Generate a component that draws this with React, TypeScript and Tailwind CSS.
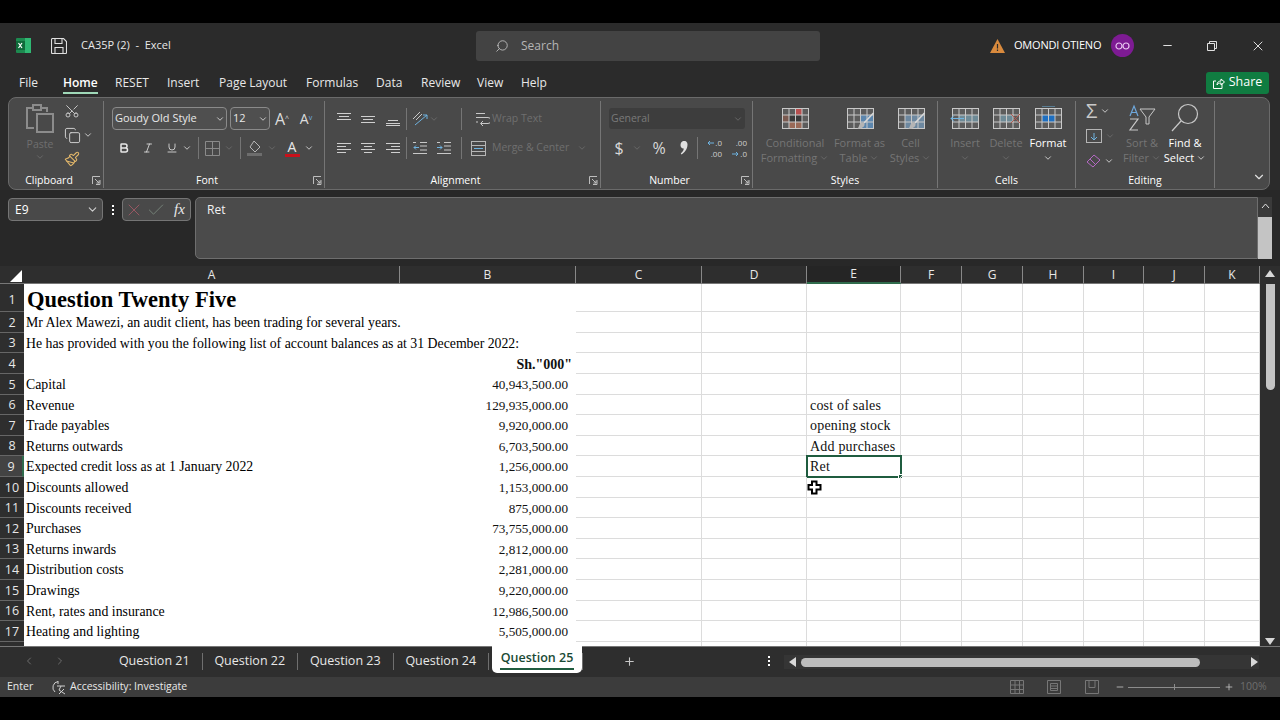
import React from 'react';
import { ChevronDown, ChevronLeft, ChevronRight, Minus, Plus, Search, X, Check, Copy, Scissors, Paintbrush, Bold, Italic, Underline } from 'lucide-react';

const UI = { fontFamily: '"Open Sans", "Noto Sans", sans-serif' };
const SERIF = { fontFamily: '"Liberation Serif", serif' };

const COLS = [
  { n: 'C', w: 'w-[126px]' },
  { n: 'D', w: 'w-[105px]' },
  { n: 'E', w: 'w-[94px]' },
  { n: 'F', w: 'w-[61px]' },
  { n: 'G', w: 'w-[61px]' },
  { n: 'H', w: 'w-[61px]' },
  { n: 'I', w: 'w-[60px]' },
  { n: 'J', w: 'w-[61px]' },
  { n: 'K', w: 'w-[55px]' },
];

const ROWS: { h: string; a?: string; b?: string; e?: string }[] = [
  { h: 'h-[28px]', a: 'Question Twenty Five' },
  { h: 'h-[21px]', a: 'Mr Alex Mawezi, an audit client, has been trading for several years.' },
  { h: 'h-[20px]', a: 'He has provided with you the following list of account balances as at 31 December 2022:' },
  { h: 'h-[21px]', b: 'Sh."000"' },
  { h: 'h-[21px]', a: 'Capital', b: '40,943,500.00' },
  { h: 'h-[20px]', a: 'Revenue', b: '129,935,000.00', e: 'cost of sales' },
  { h: 'h-[21px]', a: 'Trade payables', b: '9,920,000.00', e: 'opening stock' },
  { h: 'h-[20px]', a: 'Returns outwards', b: '6,703,500.00', e: 'Add purchases' },
  { h: 'h-[21px]', a: 'Expected credit loss as at 1 January 2022', b: '1,256,000.00', e: 'Ret' },
  { h: 'h-[21px]', a: 'Discounts allowed', b: '1,153,000.00' },
  { h: 'h-[20px]', a: 'Discounts received', b: '875,000.00' },
  { h: 'h-[21px]', a: 'Purchases', b: '73,755,000.00' },
  { h: 'h-[20px]', a: 'Returns inwards', b: '2,812,000.00' },
  { h: 'h-[21px]', a: 'Distribution costs', b: '2,281,000.00' },
  { h: 'h-[21px]', a: 'Drawings', b: '9,220,000.00' },
  { h: 'h-[20px]', a: 'Rent, rates and insurance', b: '12,986,500.00' },
  { h: 'h-[21px]', a: 'Heating and lighting', b: '5,505,000.00' },
  { h: 'h-[20px]' },
];

// paintbrush laid over the table icons
const BRUSH = (
  <>
    <path d="M28.500 7L19 17" stroke="#d8d8d8" strokeWidth="1.600" fill="none" />
    <path d="M16 16.500c2-1 4 .5 3.500 2.500-.5 2.500-4 4-7.500 4 2-1 2-5 4-6.500z" fill="#b5b5b5" />
  </>
);

function Lines({ rows, cls = 'stroke-[#cfcfcf]' }: { rows: [number, number, number][]; cls?: string }) {
  return (
    <svg width="16" height="16" viewBox="0 0 16 16" className={`${cls} fill-none`} strokeWidth="1">
      {rows.map(([y, a, b], i) => (
        <path key={i} d={`M${a} ${y}.5H${b}`} />
      ))}
    </svg>
  );
}

function TableIcon({ under, children }: { under?: React.ReactNode; children?: React.ReactNode }) {
  return (
    <svg width="30" height="24" viewBox="0 0 30 24">
      <rect x="2.500" y="2.500" width="26" height="20" fill="#5c5c5c" />
      {under}
      <rect x="2.500" y="2.500" width="26" height="20" fill="none" stroke="#c8c8c8" />
      <path d="M2 9h27M2 16h27M9 2v21M15.500 2v21M22 2v21" stroke="#c8c8c8" strokeWidth="1" fill="none" />
      {children}
    </svg>
  );
}

function Big({ w, icon, lines, dim }: { w: string; icon: React.ReactNode; lines: string[]; dim?: boolean }) {
  return (
    <div className={`${w} shrink-0 flex flex-col items-center pt-[4px]`}>
      <div className="h-[26px] flex items-center justify-center">{icon}</div>
      <div className={`mt-[4px] text-[11px] leading-[15px] text-center whitespace-nowrap ${dim ? 'text-[#757575]' : 'text-white'}`}>
        {lines.map((l) => (
          <div key={l} className="flex items-center justify-center h-[15px] gap-[2px]">
            {l.replace('^', '')}
            {l.endsWith('^') && <Chev dim={dim} />}
          </div>
        ))}
      </div>
    </div>
  );
}

function Group({ w, label, launcher, children }: { w: string; label: string; launcher?: boolean; children: React.ReactNode }) {
  return (
    <div className={`${w} shrink-0 flex flex-col border-r border-[#757575] mt-[3px] mb-[1px]`}>
      <div className="h-[72px]">{children}</div>
      <div className={`relative h-[15px] flex items-center justify-center text-[10.5px] text-white ${launcher ? 'pr-[14px]' : ''}`}>
        {label}
        {launcher && (
          <svg width="9" height="9" viewBox="0 0 9 9" className="absolute right-[2px] top-[3px] fill-none stroke-[#bdbdbd]">
            <path d="M.5 8V.5H8M8 4v4.500H4M3 3l4 4M7 4.500V7H4.500" />
          </svg>
        )}
      </div>
    </div>
  );
}

function Sep({ cls = 'mx-[6px]' }: { cls?: string }) {
  return <div className={`w-px h-[22px] bg-[#757575] shrink-0 ${cls}`} />;
}

function Chev({ dim, cls = '' }: { dim?: boolean; cls?: string }) {
  return <ChevronDown size={10} strokeWidth={2} className={`shrink-0 ${dim ? 'text-[#6e6e6e]' : 'text-[#e0e0e0]'} ${cls}`} />;
}

function Slot({ w, children }: { w: string; children?: React.ReactNode }) {
  return <div className={`${w} shrink-0 flex items-center justify-center`}>{children}</div>;
}

function Ribbon() {
  return (
    <div className="mx-[8px] h-[93px] w-[1262px] bg-[#494949] rounded-[8px] border border-[#6a6a6a] flex text-[#e8e8e8] shrink-0">
      <Group w="w-[95px]" label="Clipboard" launcher>
        <div className="flex">
          <div className="w-[48px] ml-[7px] pt-[2px] flex flex-col items-center">
            <svg width="30" height="31" viewBox="0 0 30 31" className="fill-none stroke-[#8c8c8c]" strokeWidth="2">
              <path d="M9 25H2V5h6M16 5h6v4" />
              <rect x="8" y="2" width="8" height="5" />
              <rect x="12" y="11" width="16" height="18" />
            </svg>
            <div className="text-[10.5px] leading-[14px] mt-[3px] text-[#6f6f6f]">Paste</div>
            <Chev dim cls="mt-[1px]" />
          </div>
          <div className="flex flex-col items-start gap-[4px]">
            <div className="h-[20px] flex items-center"><Scissors size={16} strokeWidth={1.4} className="rotate-[-90deg] text-[#cfcfcf]" /></div>
            <div className="h-[20px] flex items-center gap-[2px]">
              <Copy size={17} strokeWidth={1.4} className="text-[#cfcfcf]" />
              <Chev />
            </div>
            <div className="h-[20px] flex items-center"><Paintbrush size={16} strokeWidth={1.6} className="text-[#e2b76a]" /></div>
          </div>
        </div>
      </Group>
      <Group w="w-[221px]" label="Font" launcher>
        <div className="pl-[8px] pt-[6px]">
          <div className="flex items-center h-[23px]">
            <div className="w-[115px] h-[23px] border border-[#8a8a8a] rounded-[4px] flex items-center justify-between pl-[2px] pr-[1px] text-[11px] bg-[#4f4f4f]">
              Goudy Old Style
              <Chev />
            </div>
            <div className="ml-[3px] w-[40px] h-[23px] border border-[#8a8a8a] rounded-[4px] flex items-center justify-between pl-[2px] pr-[1px] text-[11px] bg-[#4f4f4f]">
              12
              <Chev />
            </div>
            <Slot w="w-[24px]"><span className="text-[16px] leading-none text-[#dcdcdc]">A<sup className="text-[7px]">^</sup></span></Slot>
            <Slot w="w-[24px]"><span className="text-[14px] leading-none text-[#dcdcdc]">A<sup className="text-[7px] text-[#6fb3e0]">v</sup></span></Slot>
          </div>
          <div className="flex items-center h-[22px] mt-[7px]">
            <Slot w="w-[24px]"><Bold size={12} strokeWidth={3} /></Slot>
            <Slot w="w-[24px]"><Italic size={12} strokeWidth={1.6} /></Slot>
            <Slot w="w-[24px]"><Underline size={12} strokeWidth={1.6} /></Slot>
            <Chev cls="-ml-[2px]" />
            <Sep cls="ml-[6px] mr-[6px]" />
            <svg width="15" height="15" viewBox="0 0 15 15" className="fill-none stroke-[#8a8a8a]">
              <path d="M.5.5h14v14H.5zM7.500 1v13M1 7.500h13" />
            </svg>
            <Chev dim cls="ml-[4px]" />
            <Sep cls="ml-[6px] mr-[6px]" />
            <svg width="16" height="17" viewBox="0 0 16 17" className="fill-none">
              <path d="M7 1l6 6-5 5-5-5z" stroke="#b5b5b5" />
              <rect x="0" y="13" width="15" height="3" fill="#6d6d6d" />
            </svg>
            <Chev dim cls="ml-[4px]" />
            <div className="w-[14px] ml-[8px] shrink-0 flex flex-col items-center">
              <span className="text-[14px] leading-[14px]">A</span>
              <div className="w-[15px] h-[3px] bg-[#c8101a]" />
            </div>
            <Chev cls="ml-[5px]" />
          </div>
        </div>
      </Group>
      <Group w="w-[276px]" label="Alignment" launcher>
        <div className="pl-[7px] pt-[6px]">
          <div className="flex items-center h-[23px]">
            <Slot w="w-[24px]"><Lines rows={[[2, 1, 15], [5, 3, 13], [8, 1, 15]]} /></Slot>
            <Slot w="w-[24px]"><Lines rows={[[5, 1, 15], [8, 3, 13], [11, 1, 15]]} /></Slot>
            <Slot w="w-[25px]"><Lines rows={[[9, 3, 13], [12, 1, 15], [14, 1, 15]]} /></Slot>
            <Sep cls="ml-[1px] mr-[5px]" />
            <svg width="17" height="16" viewBox="0 0 17 16" className="fill-none">
              <path d="M1 8l7-7M4 9l6-6" stroke="#c8c8c8" />
              <path d="M3 14L15 4M11 4h4v4" stroke="#6fb3e0" />
            </svg>
            <Chev dim />
            <Sep cls="ml-[22px] mr-[13px]" />
            <svg width="15" height="16" viewBox="0 0 15 16" className="shrink-0 fill-none stroke-[#c8c8c8]">
              <path d="M1 2.500h9M1 6.500h12a2 2 0 0 1 0 6H6M8 10l-2.500 2.500L8 15M1 11h2" />
            </svg>
            <span className="ml-[2px] text-[10.5px] text-[#6f6f6f] whitespace-nowrap">Wrap Text</span>
          </div>
          <div className="flex items-center h-[22px] mt-[7px]">
            <Slot w="w-[24px]"><Lines rows={[[3, 1, 15], [6, 1, 10], [9, 1, 15], [12, 1, 10]]} /></Slot>
            <Slot w="w-[24px]"><Lines rows={[[3, 1, 15], [6, 4, 12], [9, 1, 15], [12, 4, 12]]} /></Slot>
            <Slot w="w-[25px]"><Lines rows={[[3, 1, 15], [6, 6, 15], [9, 1, 15], [12, 6, 15]]} /></Slot>
            <Sep cls="ml-[1px] mr-[5px]" />
            <svg width="16" height="14" viewBox="0 0 16 14" className="fill-none"><path d="M8 1.500h7M8 5h7M8 9h7M1 12.500h14M1 1.500h3" stroke="#c8c8c8" /><path d="M7 6.500H2M4 4.500l-2 2 2 2" stroke="#6fb3e0" /></svg>
            <svg width="16" height="14" viewBox="0 0 16 14" className="ml-[8px] fill-none"><path d="M8 1.500h7M8 5h7M8 9h7M1 12.500h14M1 1.500h3" stroke="#c8c8c8" /><path d="M1 6.500h5M4 4.500l2 2-2 2" stroke="#6fb3e0" /></svg>
            <Sep cls="ml-[9px] mr-[9px]" />
            <svg width="15" height="15" viewBox="0 0 15 15" className="shrink-0 fill-none"><rect x=".5" y=".5" width="14" height="14" stroke="#b5b5b5" /><path d="M1 4.500h13M1 10.500h13" stroke="#b5b5b5" /><path d="M3 7.500h9" stroke="#6fb3e0" /></svg>
            <span className="ml-[6px] text-[10.5px] text-[#6f6f6f] whitespace-nowrap">Merge &amp; Center</span>
            <Chev dim cls="ml-[8px]" />
          </div>
        </div>
      </Group>
      <Group w="w-[152px]" label="Number" launcher>
        <div className="pl-[8px] pt-[7px]">
          <div className="w-[136px] h-[21px] bg-[#3d3d3d] rounded-[3px] flex items-center justify-between px-[2px] text-[10.5px] text-[#7a7a7a]">
            General
            <Chev dim />
          </div>
          <div className="flex items-center h-[22px] mt-[8px]">
            <Slot w="w-[20px]"><span className="text-[16px] text-[#d8d8d8]">$</span></Slot>
            <Chev dim cls="ml-[3px]" />
            <Slot w="w-[30px]"><span className="text-[16px] text-[#d8d8d8] ml-[4px]">%</span></Slot>
            <Slot w="w-[24px]">
              <svg width="8" height="14" viewBox="0 0 8 14" className="fill-[#e0e0e0]">
                <path d="M3 0a3.400 3.400 0 0 1 4.500 3.400C7.500 8 4.500 11.500 1.500 13.500L.8 12.500C2.500 11 3.600 9.500 3.800 7.500 2 7.800.5 6.300.5 4.300.5 2 1.500.7 3 0z" />
              </svg>
            </Slot>
            <Sep cls="ml-[1px] mr-[4px]" />
            <div className="w-[20px] text-[8px] leading-[11px] text-[#d0d0d0] flex flex-col items-end">
              <div className="flex items-center gap-[1px]">
                <svg width="7" height="6" viewBox="0 0 7 6" className="fill-none stroke-[#6fb3e0]"><path d="M7 3H1M3 1L1 3l2 2" /></svg>
                <span>.0</span>
              </div>
              <span>.00</span>
            </div>
            <div className="w-[20px] ml-[5px] text-[8px] leading-[11px] text-[#d0d0d0] flex flex-col items-end">
              <span>.00</span>
              <div className="flex items-center gap-[1px]">
                <svg width="7" height="6" viewBox="0 0 7 6" className="fill-none stroke-[#6fb3e0]"><path d="M0 3h6M4 1l2 2-2 2" /></svg>
                <span>.0</span>
              </div>
            </div>
          </div>
        </div>
      </Group>
      <Group w="w-[185px]" label="Styles">
        <div className="flex pl-[6px]">
          <Big
            w="w-[72px]"
            dim
            lines={['Conditional', 'Formatting^']}
            icon={
              <TableIcon
                under={
                  <>
                    <rect x="15.500" y="2.500" width="6.500" height="6.500" fill="#b85050" />
                    <rect x="9" y="9" width="13" height="7" fill="#3a3a3a" />
                    <rect x="9" y="16" width="13" height="6.500" fill="#9a6a58" />
                    <rect x="2.500" y="9" width="6.500" height="7" fill="#7a5a50" />
                  </>
                }
              />
            }
          />
          <Big
            w="w-[57px]"
            dim
            lines={['Format as', 'Table^']}
            icon={<TableIcon under={<rect x="15.500" y="9" width="13" height="13.500" fill="#5c86ad" />}>{BRUSH}</TableIcon>}
          />
          <Big
            w="w-[45px]"
            dim
            lines={['Cell', 'Styles^']}
            icon={<TableIcon under={<rect x="9" y="9" width="19.500" height="13.500" fill="#6d88a0" />}>{BRUSH}</TableIcon>}
          />
        </div>
      </Group>
      <Group w="w-[138px]" label="Cells">
        <div className="flex pl-[7px]">
          <Big w="w-[40px]" dim lines={['Insert', '^']} icon={<TableIcon under={<rect x="9" y="9" width="19" height="7" fill="#6e8a96" />}><path d="M14 12.500H1M4 9.500l-3 3 3 3" stroke="#6fb3e0" fill="none" /></TableIcon>} />
          <Big w="w-[42px]" dim lines={['Delete', '^']} icon={<TableIcon under={<rect x="9" y="9" width="13" height="7" fill="#6e8a96" />}><path d="M20 8l9 9M29 8l-9 9" stroke="#b25a50" fill="none" /></TableIcon>} />
          <Big w="w-[42px]" lines={['Format', '^']} icon={<TableIcon under={<rect x="9" y="9" width="13" height="7" fill="#1f6fc0" />}><path d="M9 0h13" stroke="#6fb3e0" /></TableIcon>} />
        </div>
      </Group>
      <Group w="w-[139px]" label="Editing">
        <div className="flex pl-[10px]">
          <div className="w-[33px] flex flex-col gap-[5px]">
            <div className="flex items-center gap-[3px] h-[20px]"><span className="text-[20px] leading-none text-[#c8c8c8]">Σ</span><Chev /></div>
            <div className="flex items-center gap-[3px] h-[20px]">
              <svg width="16" height="14" viewBox="0 0 16 14" className="fill-none"><rect x=".5" y=".5" width="15" height="13" stroke="#b5b5b5" /><path d="M8 4v7M5 8l3 3 3-3" stroke="#6fb3e0" /></svg>
              <Chev dim />
            </div>
            <div className="flex items-center gap-[3px] h-[20px]">
              <svg width="15" height="14" viewBox="0 0 15 14" className="fill-none"><path d="M1 8l7-7 6 5-7 7z M4 5l6 6" stroke="#b569c4" /></svg>
              <Chev />
            </div>
          </div>
          <Big w="w-[46px]" dim lines={['Sort &', 'Filter^']} icon={
            <svg width="30" height="30" viewBox="0 0 30 30" className="fill-none">
              <path d="M3 13L7 3l4 10M4.500 9.500h5" stroke="#6fa8dc" strokeWidth="1.2" />
              <path d="M3 16h8l-8 11h8" stroke="#c8c8c8" strokeWidth="1.2" />
              <path d="M13 6h15l-6 8v7h-3v-7z" stroke="#c8c8c8" />
            </svg>
          } />
          <Big w="w-[40px]" lines={['Find &', 'Select^']} icon={
            <svg width="30" height="30" viewBox="0 0 30 30" className="fill-none stroke-[#c8c8c8]" strokeWidth="1.2">
              <circle cx="18" cy="11" r="9.500" />
              <path d="M11 18L2 28" />
            </svg>
          } />
        </div>
      </Group>
      <div className="flex-1 flex items-end justify-end pr-[3px] pb-[5px]">
        <ChevronDown size={14} className="text-[#e0e0e0]" />
      </div>
    </div>
  );
}

function FormulaBar() {
  return (
    <div className="h-[63px] mt-[7px] flex pl-[8px] shrink-0">
      <div className="w-[95px] h-[23px] mt-[1px] bg-[#494949] border border-[#757575] rounded-[4px] flex items-center justify-between pl-[6px] pr-[3px] text-[12px] text-white">
        E9
        <ChevronDown size={13} className="text-[#cfcfcf]" />
      </div>
      <div className="w-[19px] h-[23px] mt-[1px] flex flex-col items-center justify-center gap-[2px]">
        <div className="w-[2px] h-[2px] bg-white" />
        <div className="w-[2px] h-[2px] bg-white" />
        <div className="w-[2px] h-[2px] bg-white" />
      </div>
      <div className="w-[69px] h-[23px] mt-[1px] bg-[#494949] border border-[#757575] rounded-[4px] flex items-center pl-[1px] gap-[2px]">
        <X size={20} strokeWidth={1} className="text-[#a85a68]" />
        <Check size={20} strokeWidth={1} className="text-[#7c8c80]" />
        <span className="ml-[6px] text-[15px] italic text-[#e8e8e8]" style={SERIF}>fx</span>
      </div>
      <div className="w-[1063px] h-[62px] ml-[4px] bg-[#4b4b4b] border border-[#6e6e6e] rounded-l-[5px] pl-[11px] pt-[3px] text-[12px] text-[#f2f2f2]">
        Ret
      </div>
      <div className="w-[14px] h-[62px] bg-[#3a3a3a] flex flex-col items-center">
        <svg width="9" height="6" viewBox="0 0 9 6" className="mt-[6px] fill-none stroke-[#e0e0e0]"><path d="M1 5l3.500-4L8 5" /></svg>
        <div className="w-[14px] h-[42px] mt-[8px] bg-[#c4c4c4]" />
      </div>
    </div>
  );
}

function ColumnHeader() {
  return (
    <div className="h-[18px] flex text-[12px] text-[#e8e8e8] bg-[#2e2e2e] shrink-0">
      <div className="w-[24px] flex items-end justify-end border-b border-[#777]">
        <div className="w-0 h-0 border-l-[12px] border-l-transparent border-b-[12px] border-b-white mr-[2px] mb-[1px]" />
      </div>
      <div className="w-[376px] flex items-center justify-center border-r border-[#888] border-b border-b-[#777]">A</div>
      <div className="w-[176px] flex items-center justify-center border-r border-[#888] border-b border-b-[#777]">B</div>
      {COLS.map((c) => (
        <div
          key={c.n}
          className={`${c.w} flex items-center justify-center border-r border-[#888] ${c.n === 'E' ? 'bg-[#252525] border-b-2 border-b-[#2f6b4c]' : 'border-b border-b-[#777]'}`}
        >
          {c.n}
        </div>
      ))}
      <div className="w-[20px] flex justify-center pt-[4px]">
        <div className="w-0 h-0 border-l-[5px] border-r-[5px] border-b-[7px] border-l-transparent border-r-transparent border-b-[#d8d8d8]" />
      </div>
    </div>
  );
}

function Grid() {
  return (
    <div className="h-[362px] flex overflow-hidden shrink-0">
      <div className="w-[1260px] bg-white overflow-hidden">
        {ROWS.map((r, i) => (
          <div key={i} className={`${r.h} flex`}>
            <div className={`w-[24px] shrink-0 flex items-center justify-center text-[12.5px] border-b border-[#666] text-[#e8e8e8] ${i === 8 ? 'bg-[#434343] border-r-2 border-r-[#2f6b4c]' : 'bg-[#2e2e2e]'} ${i === 0 ? 'pt-[5px]' : 'pt-[2px]'}`}>
              {i < 17 ? i + 1 : ''}
            </div>
            <div
              className={`w-[376px] shrink-0 flex items-center whitespace-nowrap text-black ${i === 0 ? 'text-[22.5px] font-bold pt-[3px] pl-[3px]' : 'text-[13.8px] pt-[2px] pl-[2px]'}`}
              style={SERIF}
            >
              {r.a}
            </div>
            <div
              className={`w-[176px] shrink-0 pt-[1px] flex items-center justify-end text-[#111] ${i === 3 ? 'font-bold text-[14px] pr-[4px]' : 'text-[13.2px] pr-[8px]'}`}
              style={SERIF}
            >
              {r.b}
            </div>
            {COLS.map((c) => (
              <div key={c.n} className={`${c.w} shrink-0 relative border-r border-b border-[#dcdcdc]`}>
                {c.n === 'E' && r.e && (
                  <div className="h-full pt-[1px] pl-[3px] flex items-center whitespace-nowrap text-[14px] tracking-[0.2px] text-[#111]" style={SERIF}>
                    {r.e}
                  </div>
                )}
                {c.n === 'E' && i === 8 && (
                  <div className="absolute -left-px -top-px w-[96px] h-[23px] border-2 border-[#1f5c3f]">
                    <div className="absolute -right-[3px] -bottom-[3px] w-[5px] h-[5px] bg-[#1f5c3f] border border-white" />
                  </div>
                )}
                {c.n === 'E' && i === 9 && (
                  <svg width="15" height="15" viewBox="0 0 15 15" className="absolute left-[0px] top-[3px]">
                    <path d="M5 1.500h4.500v3.500h4v4.500h-4v4H5v-4H1.500V5H5z" fill="#fff" stroke="#000" strokeWidth="2" />
                  </svg>
                )}
              </div>
            ))}
          </div>
        ))}
      </div>
      <div className="w-[20px] bg-[#2e2e2e] flex flex-col items-center">
        <div className="w-[9px] h-[106px] bg-[#c4c4c4] rounded-b-full" />
        <div className="mt-auto mb-[1px] w-0 h-0 border-l-[5px] border-r-[5px] border-t-[7px] border-l-transparent border-r-transparent border-t-[#d8d8d8]" />
      </div>
    </div>
  );
}

function SheetTabs() {
  const tabs = ['Question 21', 'Question 22', 'Question 23', 'Question 24'];
  return (
    <div className="h-[31px] bg-[#2e2e2e] flex items-start border-t border-[#777] shrink-0">
      <div className="w-[107px] h-[28px] flex items-center pl-[23px] gap-[19px] text-[#6c6c6c]">
        <ChevronLeft size={12} />
        <ChevronRight size={12} />
      </div>
      <div className="flex items-center h-[28px] text-[12.5px] text-[#e8e8e8]">
        {tabs.map((t) => (
          <div key={t} className="w-[95.5px] flex justify-center border-r border-[#6f6f6f] h-[17px] items-center">
            {t}
          </div>
        ))}
      </div>
      <div className="ml-[3px] w-[90px] h-[27px] -mt-px pt-[3px] bg-white rounded-b-[5px] text-[12.5px] font-semibold text-[#1a4a35] flex flex-col items-center">
        <span>Question 25</span>
        <div className="w-[74px] h-[2px] bg-[#1f5c3f]" />
      </div>
      <div className="w-px h-[17px] mt-[6px] bg-[#6f6f6f]" />
      <div className="ml-[40px] h-[28px] flex items-center"><Plus size={13} className="text-[#c8c8c8]" /></div>
      <div className="ml-[132px] h-[28px] flex flex-col items-center justify-center gap-[2px]">
        <div className="w-[2px] h-[2px] bg-white" />
        <div className="w-[2px] h-[2px] bg-white" />
        <div className="w-[2px] h-[2px] bg-white" />
      </div>
      <div className="ml-[14px] mt-[8px] w-[475px] h-[14px] pl-[5px] bg-[#353535] flex items-center">
        <div className="w-0 h-0 border-t-[5px] border-b-[5px] border-r-[7px] border-t-transparent border-b-transparent border-r-[#d8d8d8]" />
        <div className="ml-[5px] w-[399px] h-[9px] bg-[#bdbdbd] rounded-full" />
        <div className="ml-auto mr-[1px] w-0 h-0 border-t-[5px] border-b-[5px] border-l-[7px] border-t-transparent border-b-transparent border-l-[#d8d8d8]" />
      </div>
    </div>
  );
}

function StatusBar() {
  return (
    <div className="h-[20px] bg-[#3c3c3c] flex items-center text-[10.5px] text-[#e8e8e8] shrink-0">
      <span className="ml-[7px] w-[45px]">Enter</span>
      <svg width="15" height="15" viewBox="0 0 15 15" className="fill-none stroke-[#d0d0d0]">
        <path d="M6 1.500A6 6 0 0 0 3 12M6 1v3M5 6h8M9 6l-2 4 6 4M12 9l-5 5" />
      </svg>
      <span className="ml-[3px] w-[115px] whitespace-nowrap">Accessibility: Investigate</span>
      <svg width="14" height="14" viewBox="0 0 14 14" className="ml-[825px] fill-none stroke-[#777]"><path d="M.5.5h13v13H.5zM.5 5h13M.5 9.500h13M5 .5v13M9.500.5v13" /></svg>
      <svg width="14" height="14" viewBox="0 0 14 14" className="ml-[23px] fill-none stroke-[#777]"><path d="M.5.5h13v13H.5zM3.500 3.500h7v7h-7zM4 6h6M4 8.500h6" /></svg>
      <svg width="14" height="14" viewBox="0 0 14 14" className="ml-[24px] fill-none stroke-[#777]"><path d="M.5.5h13v13H.5zM4 .5v7h6v-7" /></svg>
      <Minus size={10} className="ml-[16px] text-[#c0c0c0]" />
      <div className="ml-[3px] w-[92px] h-px bg-[#8c8c8c] flex justify-center items-center"><div className="w-px h-[6px] bg-[#8c8c8c]" /></div>
      <Plus size={10} className="ml-[4px] text-[#c0c0c0]" />
      <span className="ml-[6px] text-[#6e6e6e]">100%</span>
    </div>
  );
}

export default function App() {
  return (
    <div className="w-[1280px] h-[720px] bg-black flex flex-col overflow-hidden" style={UI}>
      <div className="h-[23px] shrink-0" />

      {/* Title bar */}
      <div className="h-[45px] bg-[#2b2b2b] flex items-center text-[#e8e8e8] shrink-0">
        <svg width="15" height="15" viewBox="0 0 15 15" className="ml-[16px]">
          <rect width="15" height="15" rx="1" fill="#1d8a50" />
          <rect x="9" y="0" width="6" height="15" fill="#2fb873" />
          <rect x="0" y="3" width="9" height="9" fill="#0f6b3a" />
          <path d="M2.500 5l3.500 5M6 5l-3.500 5" stroke="#fff" strokeWidth="1.2" />
        </svg>
        <svg width="16" height="16" viewBox="0 0 16 16" className="ml-[20px] fill-none stroke-[#e0e0e0]" strokeWidth="1.1">
          <path d="M1.500.5h11l3 3v11a1 1 0 0 1-1 1h-13a1 1 0 0 1-1-1v-13a1 1 0 0 1 1-1zM4 .5v5h7v-5M4 15.500V9.500h8v6" />
        </svg>
        <span className="ml-[14px] w-[90px] text-[11px] whitespace-pre">CA35P (2)  -  Excel</span>
        <div className="ml-[305px] w-[344px] h-[30px] bg-[#434343] rounded-[3px] flex items-center pl-[19px] text-[12px] text-[#b5b5b5]">
          <Search size={14} strokeWidth={1.4} className="scale-x-[-1] text-[#c8c8c8]" />
          <span className="ml-[12px]">Search</span>
        </div>
        <svg width="15" height="14" viewBox="0 0 15 14" className="ml-[170px]">
          <path d="M7.500 0L15 14H0z" fill="#d98a3d" />
          <path d="M7.500 5v4.500M7.500 10.500v1.500" stroke="#2b2b2b" strokeWidth="1.2" />
        </svg>
        <span className="ml-[9px] w-[90px] text-[11px] tracking-[-0.2px] text-white whitespace-nowrap">OMONDI OTIENO</span>
        <div className="ml-[7px] w-[23px] h-[23px] rounded-full bg-[#7d1b93] flex items-center justify-center">
          <svg width="15" height="8" viewBox="0 0 15 8" className="fill-none stroke-[#e8c4f0]" strokeWidth="1.2">
            <circle cx="4" cy="4" r="3" />
            <circle cx="11" cy="4" r="3" />
          </svg>
        </div>
        <Minus size={13} className="ml-[27px] text-[#e0e0e0]" />
        <svg width="10" height="10" viewBox="0 0 10 10" className="ml-[33px] fill-none stroke-[#e0e0e0]">
          <path d="M.5 2.500h7v7h-7zM2.500 2V.5h7v7H8" />
        </svg>
        <X size={16} strokeWidth={1.4} className="ml-[33px] text-[#e8e8e8]" />
      </div>

      {/* Tabs */}
      <div className="h-[28px] pt-[1px] bg-[#2b2b2b] flex items-center text-[12px] text-[#e8e8e8] pl-[19px] shrink-0">
        <span className="w-[44px]">File</span>
        <span className="relative w-[52px] font-semibold text-white">
          Home
          <div className="absolute left-0 top-[18px] w-[35px] h-[2px] bg-[#9fd8b8]" />
        </span>
        <span className="w-[52px]">RESET</span>
        <span className="w-[52px]">Insert</span>
        <span className="w-[87px]">Page Layout</span>
        <span className="w-[70px]">Formulas</span>
        <span className="w-[45px]">Data</span>
        <span className="w-[56px]">Review</span>
        <span className="w-[44px]">View</span>
        <span className="w-[685px]">Help</span>
        <div className="w-[63px] h-[22px] bg-[#107c41] rounded-[3px] flex items-center justify-center gap-[4px] text-white text-[12.5px] font-medium">
          <svg width="12" height="12" viewBox="0 0 12 12" className="fill-none stroke-white"><path d="M9 6.500v5H.5V4H3M4 8c0-3 2-4 4-4V2l3.500 3L8 8V6c-2 0-3 .5-4 2z" /></svg>
          Share
        </div>
      </div>

      <div className="h-px bg-[#2b2b2b] shrink-0" />
      <div className="bg-[#2b2b2b] shrink-0"><Ribbon /></div>
      <div className="bg-[#282828] shrink-0"><FormulaBar /></div>
      <div className="h-[6px] bg-[#282828] shrink-0" />
      <ColumnHeader />
      <Grid />
      <SheetTabs />
      <StatusBar />
    </div>
  );
}
